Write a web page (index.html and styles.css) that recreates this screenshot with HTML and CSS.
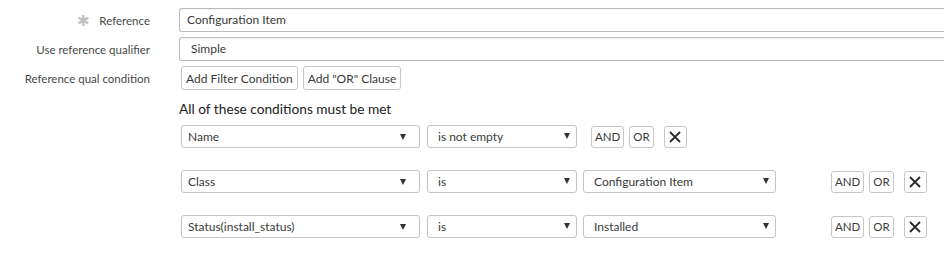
FILE: index.html
```html
<!DOCTYPE html>
<html lang="en">
<head>
<meta charset="UTF-8">
<link rel="stylesheet" href="styles.css">
<title>Reference qualifier</title>
</head>
<body>

<div class="form">
  <div class="form-row first">
    <label class="label"><span class="required">&#10033;</span>Reference</label>
    <div class="input">Configuration Item</div>
  </div>
  <div class="form-row">
    <label class="label">Use reference qualifier</label>
    <div class="input simple">Simple</div>
  </div>
  <div class="form-row">
    <label class="label">Reference qual condition</label>
    <div class="actions">
      <button class="btn">Add Filter Condition</button>
      <button class="btn">Add "OR" Clause</button>
    </div>
  </div>

  <div class="conditions">
    <div class="heading">All of these conditions must be met</div>

    <div class="cond">
      <div class="select field">Name<span class="caret"></span></div>
      <div class="select op">is not empty<span class="caret"></span></div>
      <div class="ops near">
        <button class="btn small">AND</button>
        <button class="btn small">OR</button>
        <button class="btn remove" aria-label="Remove">
          <svg width="14" height="14" viewBox="0 0 14 14"><path d="M2 2 L12 12 M12 2 L2 12" stroke="#2a2a2a" stroke-width="1.8"/></svg>
        </button>
      </div>
    </div>

    <div class="cond">
      <div class="select field">Class<span class="caret"></span></div>
      <div class="select op">is<span class="caret"></span></div>
      <div class="select value">Configuration Item<span class="caret"></span></div>
      <div class="ops">
        <button class="btn small">AND</button>
        <button class="btn small">OR</button>
        <button class="btn remove" aria-label="Remove">
          <svg width="14" height="14" viewBox="0 0 14 14"><path d="M2 2 L12 12 M12 2 L2 12" stroke="#2a2a2a" stroke-width="1.8"/></svg>
        </button>
      </div>
    </div>

    <div class="cond">
      <div class="select field">Status(install_status)<span class="caret"></span></div>
      <div class="select op">is<span class="caret"></span></div>
      <div class="select value">Installed<span class="caret"></span></div>
      <div class="ops">
        <button class="btn small">AND</button>
        <button class="btn small">OR</button>
        <button class="btn remove" aria-label="Remove">
          <svg width="14" height="14" viewBox="0 0 14 14"><path d="M2 2 L12 12 M12 2 L2 12" stroke="#2a2a2a" stroke-width="1.8"/></svg>
        </button>
      </div>
    </div>
  </div>
</div>

</body>
</html>
```

FILE: styles.css
```css
body {
  margin: 0;
  font-family: Lato, "Open Sans", sans-serif;
  color: #3a3a3a;
  background-color: #fff;
  overflow: hidden;
}
.form {
  padding-top: 8px;
}
.form-row {
  display: flex;
  align-items: center;
  margin-bottom: 5px;
}
.label {
  flex-shrink: 0;
  width: 150px;
  text-align: right;
  font-size: 11.5px;
  color: #484848;
  margin-right: 29px;
}
.required {
  color: #c2c2c2;
  font-size: 15px;
  margin-right: 9px;
  vertical-align: -1px;
}
.input {
  flex-shrink: 0;
  width: 800px;
  height: 24px;
  box-sizing: border-box;
  border: 1px solid #bcbcbc;
  border-right: none;
  border-radius: 3px 0 0 3px;
  padding: 0 7px;
  font-size: 12px;
  line-height: 22px;
  box-shadow: inset 0 1px 2px rgba(0, 0, 0, 0.06);
}
.simple {
  padding-left: 11px;
}
.actions {
  display: flex;
  gap: 5px;
  margin-left: 2px;
}
.btn {
  font-family: inherit;
  color: #3a3a3a;
  background-color: #fff;
  border: 1px solid #c6c6c6;
  border-radius: 3px;
  height: 24px;
  padding: 0 4px;
  font-size: 12px;
  cursor: pointer;
}
.conditions {
  margin-left: 179px;
  padding-top: 5px;
}
.heading {
  font-size: 13.7px;
  color: #222;
  margin-bottom: 8px;
}
.cond {
  display: flex;
  align-items: center;
  margin-left: 2px;
  margin-bottom: 22px;
}
.select {
  position: relative;
  height: 23px;
  box-sizing: border-box;
  border: 1px solid #c4c4c4;
  border-radius: 3px;
  padding: 0 7px;
  font-size: 12px;
  line-height: 22px;
  color: #3a3a3a;
}
.field {
  width: 239px;
  padding-left: 6px;
}
.op {
  width: 150px;
  margin-left: 7px;
  padding-left: 10px;
}
.value {
  width: 193px;
  margin-left: 6px;
  padding-left: 10px;
}
.caret {
  position: absolute;
  right: 13px;
  top: 8px;
  border-left: 3.5px solid transparent;
  border-right: 3.5px solid transparent;
  border-top: 6px solid #333;
}
.op .caret,
.value .caret {
  right: 6px;
  top: 7px;
}
.ops {
  display: flex;
  align-items: center;
  margin-left: 55px;
}
.ops.near {
  margin-left: 14px;
}
.small {
  height: 22px;
  padding: 0 3px;
  font-size: 11.5px;
  margin-right: 5px;
}
.remove {
  width: 23px;
  height: 22px;
  margin-left: 5px;
  padding: 0;
  display: flex;
  align-items: center;
  justify-content: center;
}
```
